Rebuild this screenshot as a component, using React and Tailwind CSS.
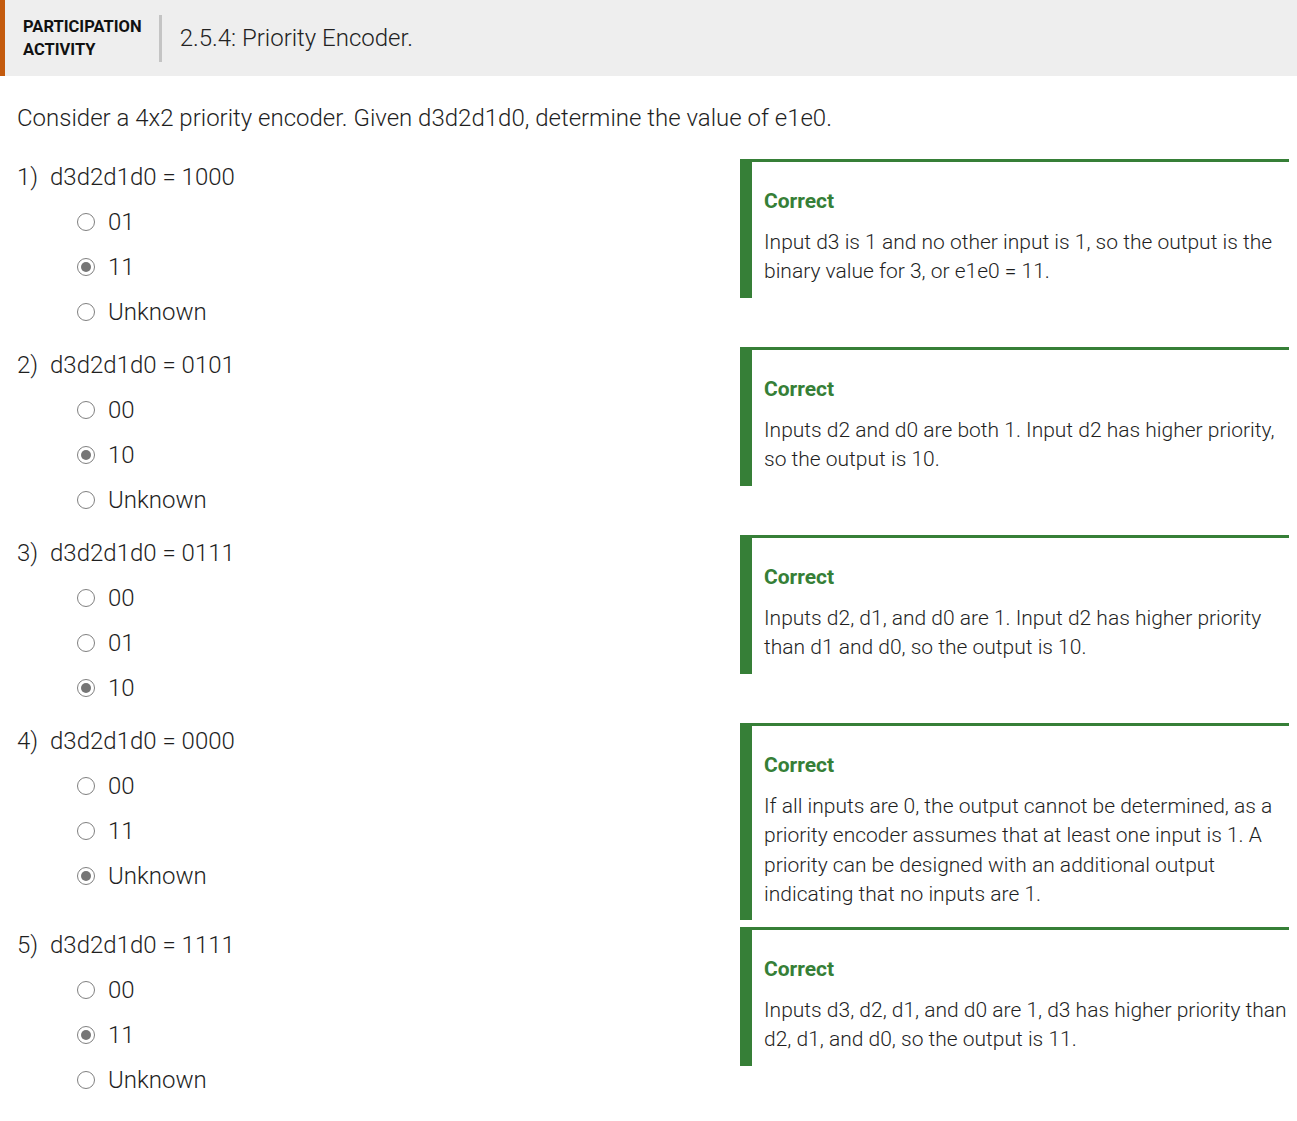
import React from "react";

const rows = [
  {
    n: "1)",
    q: "d3d2d1d0 = 1000",
    opts: ["01", "11", "Unknown"],
    sel: 1,
    fb: "Input d3 is 1 and no other input is 1, so the output is the binary value for 3, or e1e0 = 11.",
  },
  {
    n: "2)",
    q: "d3d2d1d0 = 0101",
    opts: ["00", "10", "Unknown"],
    sel: 1,
    fb: "Inputs d2 and d0 are both 1. Input d2 has higher priority, so the output is 10.",
  },
  {
    n: "3)",
    q: "d3d2d1d0 = 0111",
    opts: ["00", "01", "10"],
    sel: 2,
    fb: "Inputs d2, d1, and d0 are 1. Input d2 has higher priority than d1 and d0, so the output is 10.",
  },
  {
    n: "4)",
    q: "d3d2d1d0 = 0000",
    opts: ["00", "11", "Unknown"],
    sel: 2,
    fb: "If all inputs are 0, the output cannot be determined, as a priority encoder assumes that at least one input is 1. A priority can be designed with an additional output indicating that no inputs are 1.",
  },
  {
    n: "5)",
    q: "d3d2d1d0 = 1111",
    opts: ["00", "11", "Unknown"],
    sel: 1,
    fb: "Inputs d3, d2, d1, and d0 are 1, d3 has higher priority than d2, d1, and d0, so the output is 11.",
  },
];

function Radio({ checked }) {
  return (
    <div className="w-[18px] h-[18px] rounded-full border-[1.5px] border-[#808080] flex items-center justify-center bg-white shrink-0">
      {checked && <div className="w-[10px] h-[10px] rounded-full bg-[#757575]" />}
    </div>
  );
}

export default function App() {
  return (
    <div
      className="w-[1297px] min-h-[1121px] bg-white text-[#1f1f1f]"
      style={{ fontFamily: "Roboto, 'Liberation Sans', sans-serif" }}
    >
      <div className="h-[76px] bg-[#eeeeee] border-l-[5px] border-[#c35a0d] flex items-center pl-[18px]">
        <div className="text-[16.5px] font-bold leading-[23px] text-[#111111]">
          <div>PARTICIPATION</div>
          <div>ACTIVITY</div>
        </div>
        <div className="ml-[17px] w-[3px] h-[47px] bg-[#c4c4c4]" />
        <div className="ml-[18px] text-[24px] font-light text-[#222222] leading-[32px]">
          2.5.4: Priority Encoder.
        </div>
      </div>

      <div className="pl-[17px] pr-[8px]">
        <p className="mt-[26px] text-[24px] font-light leading-[32px]">
          Consider a 4x2 priority encoder. Given d3d2d1d0, determine the value of e1e0.
        </p>

        <div className="mt-[25px] flex flex-col">
          {rows.map((r, i) => (
            <div key={i} className="flex min-h-[188px]">
              <div className="w-[723px] shrink-0">
                <div className="h-[35px] flex items-center text-[24px] font-light">
                  <span className="w-[33px]">{r.n}</span>
                  <span>{r.q}</span>
                </div>
                <div className="mt-[5px] ml-[60px]">
                  {r.opts.map((o, j) => (
                    <div key={j} className="h-[45px] flex items-center gap-[13px] text-[24px] font-light">
                      <Radio checked={j === r.sel} />
                      <span>{o}</span>
                    </div>
                  ))}
                </div>
              </div>
              <div className="flex-1 self-start mb-[7px] border-l-[12px] border-t-[3px] border-[#367f37] pl-[12px] pr-0 pt-[25px] pb-[11px]">
                <div className="text-[21px] font-bold text-[#367f37] leading-[28px]">Correct</div>
                <div className="mt-[13px] text-[21px] font-light leading-[29.3px]">{r.fb}</div>
              </div>
            </div>
          ))}
        </div>
      </div>
    </div>
  );
}
